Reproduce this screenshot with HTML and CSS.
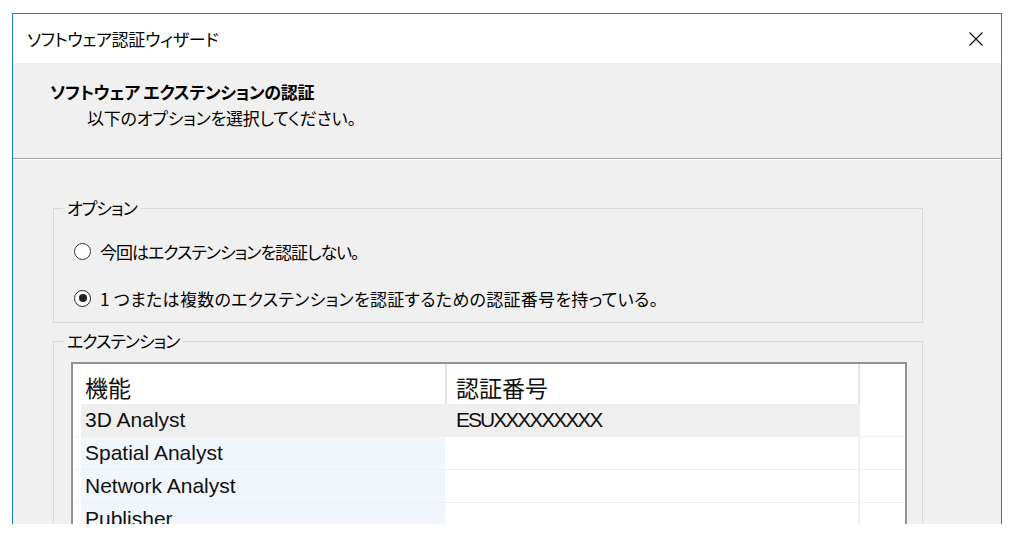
FILE: index.html
```html
<!DOCTYPE html>
<html lang="ja">
<head>
  <meta charset="UTF-8">
  <title>ソフトウェア認証ウィザード</title>
  <link rel="stylesheet" href="styles.css">
</head>
<body>
  <div class="window">
    <div class="titlebar">
      <span class="title">ソフトウェア認証ウィザード</span>
      <svg class="close" width="14" height="14" viewBox="0 0 14 14">
        <path d="M0.5 0.5 L13.5 13.5 M13.5 0.5 L0.5 13.5" stroke="#111" stroke-width="1.2" fill="none"/>
      </svg>
    </div>

    <!-- Page header -->
    <div class="header">
      <div class="header-title">ソフトウェア エクステンションの認証</div>
      <div class="header-sub">以下のオプションを選択してください。</div>
    </div>
    <div class="separator"></div>

    <div class="content">
      <fieldset class="group options">
        <legend>オプション</legend>
        <div class="radio-row">
          <span class="radio"></span>
          <span class="kana">今回はエクステンションを認証しない。</span>
        </div>
        <div class="radio-row second">
          <span class="radio checked"></span>
          <span class="wide">1 つまたは複数のエクステンションを認証するための認証番号を持っている。</span>
        </div>
      </fieldset>

      <fieldset class="group extensions">
        <legend>エクステンション</legend>
        <div class="listview">
          <div class="lv-row lv-head">
            <div class="c1">機能</div>
            <div class="c2">認証番号</div>
            <div class="c3"></div>
          </div>
          <div class="lv-row selected">
            <div class="c1">3D Analyst</div>
            <div class="c2 code">ESUXXXXXXXXX</div>
            <div class="c3"></div>
          </div>
          <div class="lv-row">
            <div class="c1">Spatial Analyst</div>
            <div class="c2"></div>
            <div class="c3"></div>
          </div>
          <div class="lv-row">
            <div class="c1">Network Analyst</div>
            <div class="c2"></div>
            <div class="c3"></div>
          </div>
          <div class="lv-row">
            <div class="c1">Publisher</div>
            <div class="c2"></div>
            <div class="c3"></div>
          </div>
        </div>
      </fieldset>
    </div>
  </div>
</body>
</html>
```

FILE: styles.css
```css
html, body {
  margin: 0;
  padding: 0;
  background: #fff;
  font-family: "Noto Sans CJK JP", sans-serif;
  font-feature-settings: "palt";
  color: #000;
}

.window {
  margin: 13px 0 0 12px;
  width: 988px;
  height: 510px;
  border: 1px solid #1c7fd6;
  border-bottom: none;
  background: #f0f0f0;
  overflow: hidden;
}

/* Title bar */
.titlebar {
  height: 49px;
  background: #fff;
  display: flex;
  align-items: center;
  justify-content: space-between;
  padding: 0 18px 0 14px;
}

.title {
  font-size: 17px;
  line-height: 22px;
  letter-spacing: -0.3px;
}

.close {
  display: block;
}

/* Header */
.header {
  height: 95px;
  box-sizing: border-box;
  padding: 18px 0 0 37px;
  background: #f0f0f0;
}

.header-title {
  font-size: 17px;
  line-height: 22px;
  font-weight: bold;
  letter-spacing: -0.3px;
}

.header-sub {
  font-size: 17px;
  line-height: 22px;
  margin: 4px 0 0 37px;
  letter-spacing: -0.2px;
}

.separator {
  height: 0;
  border-top: 1px solid #a0a0a0;
  border-bottom: 1px solid #fff;
}

/* Body */
.content {
  padding: 38px 78px 0 40px;
}

.group {
  margin: 0;
  padding: 0;
  min-width: 0;
  border: 1px solid #d9d9d9;
}

.group legend {
  margin-left: 9px;
  padding: 0 4px;
  font-size: 17px;
  line-height: 20px;
  letter-spacing: -1px;
}

.options {
  padding: 21px 0 12px 0;
}

.radio-row {
  display: flex;
  align-items: center;
  gap: 9px;
  height: 24px;
  padding-left: 20px;
  font-size: 17px;
}

.radio-row .kana {
  letter-spacing: -1px;
}

.radio-row .wide {
  letter-spacing: 0.3px;
}

.radio-row.second {
  margin-top: 23px;
}

.radio {
  width: 15px;
  height: 15px;
  border: 1px solid #333;
  border-radius: 50%;
  background: #fff;
  display: flex;
  align-items: center;
  justify-content: center;
}

.radio.checked {
  border-color: #222;
}

.radio.checked::after {
  content: "";
  width: 8px;
  height: 8px;
  border-radius: 50%;
  background: #222;
}

.extensions {
  margin-top: 8px;
  padding: 11px 15px 0 0;
}

/* List view */
.listview {
  margin-left: 17px;
  border: 2px solid #8f949b;
  background: #fff;
  height: 400px;
}

.lv-row {
  display: flex;
  height: 32px;
  padding-left: 8px;
  border-bottom: 1px solid #f0f0f0;
  font-family: "Liberation Sans", "Noto Sans CJK JP", sans-serif;
  font-size: 21px;
  line-height: 32px;
  color: #111;
}

.lv-row .c1 {
  width: 364px;
  box-sizing: border-box;
  padding-left: 4px;
  background: #f1f5fc;
}

.lv-row .c2 {
  width: 413px;
  box-sizing: border-box;
  padding-left: 9px;
  border-left: 2px solid transparent;
}

.lv-row .c3 {
  flex: 1;
  border-left: 2px solid #f0f0f0;
}

.lv-row.selected .c1,
.lv-row.selected .c2 {
  background: #efefef;
}

.code {
  letter-spacing: -2px;
}

.lv-head {
  height: 40px;
  border-bottom: none;
  font-family: "Noto Sans CJK JP", sans-serif;
  font-size: 23px;
  line-height: 40px;
}

.lv-head .c1 {
  background: #fff;
  padding-top: 3px;
}

.lv-head .c2 {
  border-left-color: #e5e5e5;
  padding-top: 3px;
}

.lv-head .c3 {
  border-left-color: #e5e5e5;
}
```
